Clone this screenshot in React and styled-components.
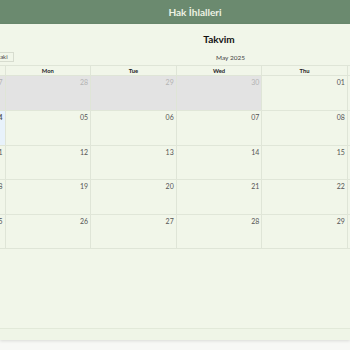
import React from "react";
import styled, { createGlobalStyle } from "styled-components";

const Global = createGlobalStyle`
  html, body { margin: 0; padding: 0; background: #f7f8f5; }
  body {
    font-family: Lato, "Open Sans", "Noto Sans", "DejaVu Sans", sans-serif;
    overflow: hidden;
    -webkit-font-smoothing: antialiased;
  }
`;

const Page = styled.div`
  width: 350px;
  height: 350px;
  overflow: hidden;
  display: flex;
  flex-direction: column;
`;

const TopBar = styled.header`
  height: 24px;
  flex: none;
  background: #6b8a6f;
  display: flex;
  align-items: center;
  justify-content: center;
  padding-left: 40px;
  color: #eef2e4;
  font-weight: 700;
  font-size: 10px;
  box-sizing: border-box;
`;

const Card = styled.main`
  flex: none;
  height: 316px;
  background: #f1f6e9;
  box-shadow: 0 1px 3px rgba(0, 0, 0, 0.12);
  display: flex;
  flex-direction: column;
`;

const Panel = styled.section`
  width: 600px;
  margin-left: -81px;
  display: flex;
  flex-direction: column;
  flex: 1;
`;

const Title = styled.h2`
  margin: 8px 0 0;
  text-align: center;
  font-size: 10px;
  line-height: 14px;
  font-weight: 700;
  color: #111;
`;

const Toolbar = styled.div`
  display: flex;
  align-items: center;
  margin-top: 6px;
  height: 10px;
`;

const BtnGroup = styled.div`
  display: flex;
  width: ${(p) => p.$w}px;
  flex: none;
`;

const Btn = styled.button`
  font-family: inherit;
  font-size: 6px;
  line-height: 8px;
  height: 10px;
  padding: 0 3px;
  margin: 0;
  border: 1px solid #d7dccf;
  background: transparent;
  color: #444;
  flex: 1;
  & + & { margin-left: -1px; }
`;

const Label = styled.div`
  flex: 1;
  text-align: center;
  font-size: 6.5px;
  color: #444;
`;

const Month = styled.div`
  margin-top: 3px;
  border: 1px solid #dfe5d7;
  border-left: none;
  display: flex;
  flex-direction: column;
`;

const HeadRow = styled.div`
  display: grid;
  grid-template-columns: repeat(7, 1fr);
  height: 9px;
  border-bottom: 1px solid #dfe5d7;
`;

const HeadCell = styled.div`
  border-left: 1px solid #dfe5d7;
  text-align: center;
  font-size: 5.8px;
  line-height: 9px;
  font-weight: 700;
  color: #222;
`;

const Week = styled.div`
  display: grid;
  grid-template-columns: repeat(7, 1fr);
  height: 34.4px;
  box-sizing: border-box;
  & + & { border-top: 1px solid #e0e6d8; }
`;

const Day = styled.div`
  border-left: 1px solid #dfe5d7;
  background: ${(p) => (p.$today ? "#e8f2fb" : p.$off ? "#e3e3e3" : "transparent")};
  text-align: right;
  padding: 2px 2px 0 0;
  font-size: 7px;
  line-height: 8px;
  color: ${(p) => (p.$off ? "#b3b3b3" : "#555")};
  font-weight: ${(p) => (p.$today ? 700 : 400)};
`;

const Spacer = styled.div`
  flex: 1;
`;

const Footer = styled.footer`
  height: 11px;
  border-top: 1px solid #e2e9d9;
  background: #eff5e7;
`;

const days = ["Sun", "Mon", "Tue", "Wed", "Thu", "Fri", "Sat"];
const weeks = [
  [27, 28, 29, 30, 1, 2, 3],
  [4, 5, 6, 7, 8, 9, 10],
  [11, 12, 13, 14, 15, 16, 17],
  [18, 19, 20, 21, 22, 23, 24],
  [25, 26, 27, 28, 29, 30, 31],
];
const pad = (n) => String(n).padStart(2, "0");

export default function App() {
  return (
    <Page>
      <Global />
      <TopBar>Hak İhlalleri</TopBar>
      <Card>
        <Panel>
          <Title>Takvim</Title>
          <Toolbar>
            <BtnGroup $w={95}>
              <Btn>Bugün</Btn>
              <Btn>Önceki</Btn>
              <Btn>Sonraki</Btn>
            </BtnGroup>
            <Label>May 2025</Label>
            <BtnGroup $w={72}>
              <Btn>Ay</Btn>
              <Btn>Hafta</Btn>
              <Btn>Gün</Btn>
            </BtnGroup>
          </Toolbar>
          <Month>
            <HeadRow>
              {days.map((d) => (
                <HeadCell key={d}>{d}</HeadCell>
              ))}
            </HeadRow>
            {weeks.map((w, wi) => (
              <Week key={wi}>
                {w.map((d, di) => {
                  const off = wi === 0 && d > 20;
                  return (
                    <Day key={di} $off={off} $today={wi === 1 && di === 0}>
                      {pad(d)}
                    </Day>
                  );
                })}
              </Week>
            ))}
          </Month>
          <Spacer />
        </Panel>
        <Footer />
      </Card>
    </Page>
  );
}
